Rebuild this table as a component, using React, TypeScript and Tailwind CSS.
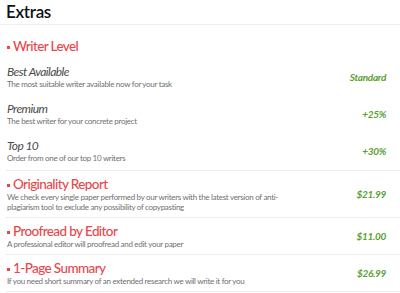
import React from "react"

interface Level {
  name: string
  note: string
  price: string
}

interface Extra {
  title: string
  note: string[]
  price: string
}

const levels: Level[] = [
  { name: "Best Available", note: "The most suitable writer available now for your task", price: "Standard" },
  { name: "Premium", note: "The best writer for your concrete project", price: "+25%" },
  { name: "Top 10", note: "Order from one of our top 10 writers", price: "+30%" },
]

const extras: Extra[] = [
  {
    title: "Originality Report",
    note: [
      "We check every single paper performed by our writers with the latest version of anti-",
      "plagiarism tool to exclude any possibility of copypasting",
    ],
    price: "$21.99",
  },
  { title: "Proofread by Editor", note: ["A professional editor will proofread and edit your paper"], price: "$11.00" },
  {
    title: "1-Page Summary",
    note: ["If you need short summary of an extended research we will write it for you"],
    price: "$26.99",
  },
]

function Heading({ children }: { children: React.ReactNode }) {
  return (
    <div className="flex items-center text-[13.5px] leading-[16px] tracking-[-0.6px] font-medium text-[#e9474c]">
      <span className="inline-block w-[3px] h-[3px] bg-[#e9474c] mr-[3px] mt-[2px]" />
      {children}
    </div>
  )
}

function Note({ children }: { children: React.ReactNode }) {
  return <div className="text-[8px] leading-[10px] tracking-[-0.3px] text-[#707070]">{children}</div>
}

function Price({ children }: { children: React.ReactNode }) {
  return (
    <span className="text-[10px] tracking-[-0.3px] font-bold italic text-[#58a02f] shrink-0">{children}</span>
  )
}

export default function App() {
  return (
    <div className="w-[400px] h-[293px] bg-white overflow-hidden font-['Lato',sans-serif]">
      <header className="h-[25px] px-[6px] pt-[1px] border-b border-[#efefef]">
        <h1 className="text-[17px] leading-[22px] tracking-[-0.3px] font-semibold text-[#111]">Extras</h1>
      </header>

      {/* writer level options */}
      <section className="ml-[6px] pl-[1px] pr-[14px] pt-[13px] pb-[7px] border-b border-[#ededed]">
        <Heading>Writer Level</Heading>
        <div className="flex flex-col gap-[13px] mt-[11px]">
          {levels.map((l) => (
            <div key={l.name} className="flex items-center justify-between">
              <div>
                <div className="text-[12px] leading-[14px] tracking-[-0.55px] italic text-[#4a4a4a]">{l.name}</div>
                <Note>{l.note}</Note>
              </div>
              <Price>{l.price}</Price>
            </div>
          ))}
        </div>
      </section>

      {extras.map((e) => (
        <section
          key={e.title}
          className="ml-[6px] pl-[1px] pr-[14px] py-[5px] border-b border-[#ededed] flex items-center justify-between"
        >
          <div>
            <Heading>{e.title}</Heading>
            {e.note.map((n) => (
              <Note key={n}>{n}</Note>
            ))}
          </div>
          <Price>{e.price}</Price>
        </section>
      ))}
    </div>
  )
}
